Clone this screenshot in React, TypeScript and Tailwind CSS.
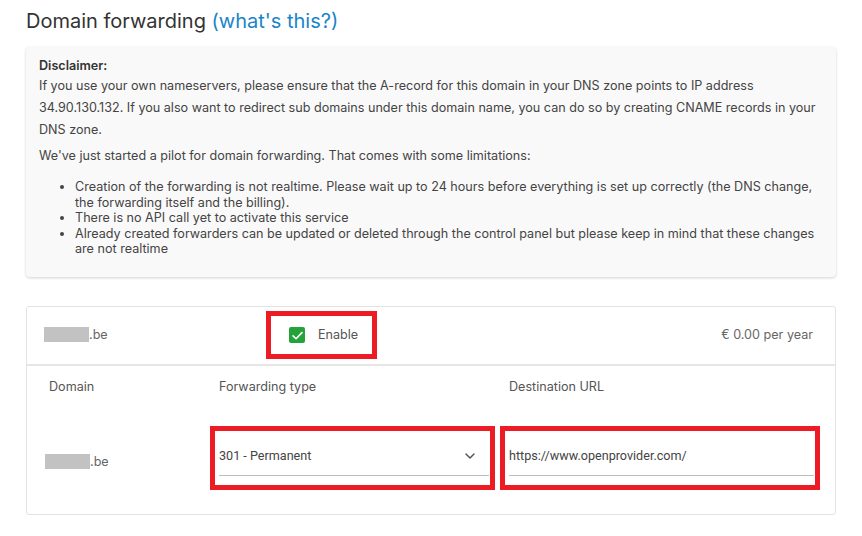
import { ChevronDown } from "lucide-react";

const limits = [
  "Creation of the forwarding is not realtime. Please wait up to 24 hours before everything is set up correctly (the DNS change, the forwarding itself and the billing).",
  "There is no API call yet to activate this service",
  "Already created forwarders can be updated or deleted through the control panel but please keep in mind that these changes are not realtime",
];

// domain names are masked with a grey block in front of the TLD
function MaskedDomain({ tld }: { tld: string }) {
  return (
    <span className="flex items-center text-[12.6px] text-[#666]">
      <span className="inline-block h-[15px] w-[45px] bg-[#c2c2c2]" />
      <span>{tld}</span>
    </span>
  );
}

function Checkbox() {
  return (
    <span className="flex h-4 w-4 items-center justify-center rounded-[2px] bg-[#24a33a]">
      <svg viewBox="0 0 16 16" className="h-[13px] w-[13px]" fill="none">
        <path d="M2.5 8.5 6.2 12 13.5 4.5" stroke="#fff" strokeWidth="2" strokeLinecap="round" strokeLinejoin="round" />
      </svg>
    </span>
  );
}

export default function App() {
  return (
    <div className="min-h-screen bg-white px-[26px] font-['Inter',sans-serif]">
      <h1 className="pt-[7px] text-[20px] leading-[28px] text-[#333]">
        Domain forwarding <a className="text-[#1a85c6]">(what's this?)</a>
      </h1>

      {/* disclaimer panel */}
      <div className="mt-[12px] rounded-[4px] bg-[#f9f9f9] px-[13px] pt-[9px] pb-[20px] text-[12.6px] text-[#444] shadow-[0_1px_3px_rgba(0,0,0,0.18)]">
        <div className="font-semibold leading-[19px] text-[#333]">Disclaimer:</div>
        <p className="leading-[22px]">
          If you use your own nameservers, please ensure that the A-record for this domain in your DNS zone points to IP address
          34.90.130.132. If you also want to redirect sub domains under this domain name, you can do so by creating CNAME records in your
          DNS zone.
        </p>
        <p className="mt-[4px] leading-[22px]">We've just started a pilot for domain forwarding. That comes with some limitations:</p>
        <ul className="mt-[12px] list-disc pl-[36px] leading-[15.5px]">
          {limits.map((l) => (
            <li key={l}>{l}</li>
          ))}
        </ul>
      </div>

      {/* forwarding card */}
      <div className="mt-[29px] rounded-[3px] border border-[#e3e3e3]">
        <div className="flex h-[59px] items-center border-b-2 border-[#e6e6e6]">
          <div className="w-[239px] pl-[17px]">
            <MaskedDomain tld=".be" />
          </div>
          <div className="flex h-[48px] w-[111px] items-center border-[5px] border-[#ed1c24] pl-[18px]">
            <Checkbox />
            <span className="ml-[13px] text-[12.6px] text-[#555]">Enable</span>
          </div>
          <div className="ml-auto pr-[22px] text-[12.6px] text-[#666]">€ 0.00 per year</div>
        </div>

        <div className="pl-[22px] pt-[11px] pb-[24px]">
          <div className="grid grid-cols-[170px_290px_1fr] text-[12.6px] leading-[20px] text-[#555]">
            <div>Domain</div>
            <div>Forwarding type</div>
            <div>Destination URL</div>
          </div>

          <div className="mt-[29px] grid grid-cols-[170px_290px_1fr] items-center">
            <div className="-ml-[4px] pt-[9px]">
              <MaskedDomain tld=".be" />
            </div>
            <div className="-ml-[9px] h-[64px] w-[285px] border-[5px] border-[#ed1c24] pl-[4px] pr-[1px] pt-[15px]">
              <div className="flex items-center border-b border-[#bdbdbd] pb-[9px] font-['Roboto',sans-serif] text-[12.6px] leading-[20px] text-[#444]">
                <span>301 - Permanent</span>
                <ChevronDown className="ml-auto mr-[11px] h-[16px] w-[16px] text-[#555]" strokeWidth={2.2} />
              </div>
            </div>
            <div className="-ml-[9px] h-[64px] w-[320px] border-[5px] border-[#ed1c24] pl-[4px] pr-[1px] pt-[15px]">
              <div className="border-b border-[#bdbdbd] pb-[9px] font-['Roboto',sans-serif] text-[12.6px] leading-[20px] text-[#444]">
                https://www.openprovider.com/
              </div>
            </div>
          </div>
        </div>
      </div>
    </div>
  );
}
